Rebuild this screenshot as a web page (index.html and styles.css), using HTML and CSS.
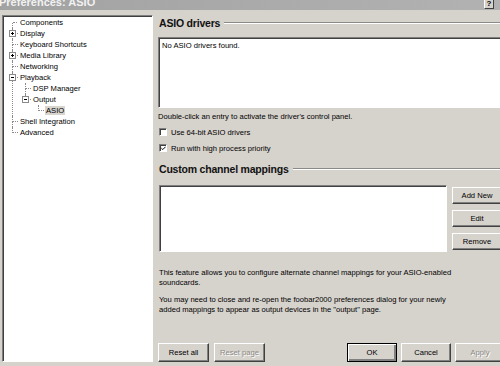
FILE: index.html
```html
<!DOCTYPE html>
<html lang="en">
<head>
  <meta charset="UTF-8">
  <title>Preferences: ASIO</title>
  <link rel="stylesheet" href="styles.css">
</head>
<body>
  <div class="titlebar">
    <span class="title">Preferences: ASIO</span>
    <span class="help">?</span>
  </div>

  <div class="main">
    <!-- page tree -->
    <div class="tree-panel">
      <ul class="tree">
        <li><span>Components</span></li>
        <li><i class="exp plus"></i><span>Display</span></li>
        <li><span>Keyboard Shortcuts</span></li>
        <li><i class="exp plus"></i><span>Media Library</span></li>
        <li><span>Networking</span></li>
        <li><i class="exp"></i><span>Playback</span>
          <ul>
            <li><span>DSP Manager</span></li>
            <li><i class="exp"></i><span>Output</span>
              <ul>
                <li><span class="sel">ASIO</span></li>
              </ul>
            </li>
          </ul>
        </li>
        <li><span>Shell Integration</span></li>
        <li><span>Advanced</span></li>
      </ul>
    </div>

    <!-- ASIO page -->
    <div class="page">
      <div class="group-title">ASIO drivers</div>
      <div class="listbox drivers">No ASIO drivers found.</div>
      <div class="hint">Double-click an entry to activate the driver's control panel.</div>

      <label class="check"><span class="box"></span>Use 64-bit ASIO drivers</label>
      <label class="check"><span class="box">
        <svg width="7" height="7" viewBox="0 0 7 7"><path d="M0.5 3 L2.5 5 L6.5 1" fill="none" stroke="#000" stroke-width="1.4"/></svg>
      </span>Run with high process priority</label>

      <div class="group-title second">Custom channel mappings</div>
      <div class="mapping-row">
        <div class="listbox mappings"></div>
        <div class="side-buttons">
          <button class="btn">Add New</button>
          <button class="btn">Edit</button>
          <button class="btn">Remove</button>
        </div>
      </div>

      <p class="note first">This feature allows you to configure alternate channel mappings for your ASIO-enabled<br>soundcards.</p>
      <p class="note">You may need to close and re-open the foobar2000 preferences dialog for your newly<br>added mappings to appear as output devices in the "output" page.</p>

      <div class="dialog-buttons">
        <button class="btn wide">Reset all</button>
        <button class="btn wide" disabled>Reset page</button>
        <span class="spacer"></span>
        <button class="btn default">OK</button>
        <button class="btn">Cancel</button>
        <button class="btn" disabled>Apply</button>
      </div>
    </div>
  </div>
</body>
</html>
```

FILE: styles.css
```css
    html, body {
      margin: 0;
      height: 100%;
      overflow: hidden;
    }
    body {
      background: #d6d2cc;
      font-family: "Liberation Sans", Arial, sans-serif;
      font-size: 7.6px;
      color: #000;
    }

    .titlebar {
      height: 10px;
      overflow: hidden;
      display: flex;
      justify-content: space-between;
      background: linear-gradient(to right, #a2a2a2, #b2b2b2);
    }
    .titlebar .title {
      font-size: 11px;
      font-weight: bold;
      color: #f2f2f2;
      line-height: 10px;
      margin-top: -3px;
      margin-left: -1px;
    }
    .titlebar .help {
      width: 10px;
      height: 11px;
      margin: -2px 6px 0 0;
      background: #d6d2cc;
      border: 1px solid;
      border-color: #fff #404040 #404040 #fff;
      box-sizing: border-box;
      font-size: 8px;
      font-weight: bold;
      text-align: center;
      line-height: 10px;
    }

    .main {
      display: flex;
      height: 352px;
      padding: 5px 0 0 2px;
      box-sizing: border-box;
    }

    /* tree */
    .tree-panel {
      width: 151px;
      flex: none;
      background: #fff;
      border: 1px solid;
      border-color: #808080 #fff #fff #808080;
      box-shadow: inset 1px 1px #404040;
      box-sizing: border-box;
      padding: 1px 0 0 1px;
    }
    .tree, .tree ul {
      list-style: none;
      margin: 0;
      padding: 0;
    }
    .tree {
      padding-left: 8px;
    }
    .tree ul {
      padding-left: 6px;
    }
    .tree li {
      position: relative;
      padding-left: 7px;
      line-height: 11px;
      white-space: nowrap;
    }
    .tree li::before {
      content: '';
      position: absolute;
      left: 0;
      top: 0;
      width: 5px;
      height: 5px;
      border-left: 1px dotted #8a8a8a;
      border-bottom: 1px dotted #8a8a8a;
    }
    .tree > li:first-child::before {
      border-left: none;
      left: 1px;
      width: 4px;
    }
    .tree li:not(:last-child)::after {
      content: '';
      position: absolute;
      left: 0;
      top: 6px;
      bottom: 0;
      border-left: 1px dotted #8a8a8a;
    }
    .tree span {
      padding: 0 1px;
    }
    .tree .sel {
      background: #d8d4ce;
    }
    .exp {
      position: absolute;
      z-index: 1;
      left: -3px;
      top: 2px;
      width: 7px;
      height: 7px;
      box-sizing: border-box;
      border: 1px solid #8a8a8a;
      background: #fff;
    }
    .exp::before {
      content: '';
      position: absolute;
      left: 1px;
      top: 2px;
      width: 3px;
      height: 1px;
      background: #000;
    }
    .exp.plus::after {
      content: '';
      position: absolute;
      left: 2px;
      top: 1px;
      width: 1px;
      height: 3px;
      background: #000;
    }

    /* page */
    .page {
      width: 347px;
      flex: none;
      margin-left: 5px;
      display: flex;
      flex-direction: column;
    }
    .group-title {
      display: flex;
      align-items: center;
      height: 15px;
      font-size: 10.5px;
      font-weight: bold;
      letter-spacing: -0.2px;
      color: #111;
      margin-bottom: 7px;
      padding-left: 1px;
    }
    .group-title::after {
      content: '';
      flex: 1;
      margin-left: 4px;
      border-top: 1px solid #8c8a86;
      border-bottom: 1px solid #fff;
    }
    .group-title.second {
      margin-top: 5px;
      margin-bottom: 9px;
    }

    .listbox {
      background: #fff;
      border: 1px solid;
      border-color: #808080 #fff #fff #808080;
      box-shadow: inset 1px 1px #404040;
      box-sizing: border-box;
    }
    .drivers {
      height: 71px;
      padding: 3px 0 0 3px;
      line-height: 10px;
    }

    .hint {
      margin-top: 4px;
      line-height: 10px;
    }
    .check {
      display: flex;
      align-items: center;
      height: 16px;
      padding-left: 1px;
    }
    .check:first-of-type {
      margin-top: 2px;
    }
    .box {
      width: 8px;
      height: 8px;
      box-sizing: border-box;
      margin-right: 4px;
      background: #fff;
      border: 1px solid;
      border-color: #808080 #fff #fff #808080;
      box-shadow: inset 1px 1px #404040;
      display: flex;
      align-items: center;
      justify-content: center;
    }
    .box svg {
      margin: 1px 0 0 1px;
    }

    .mapping-row {
      display: flex;
      gap: 5px;
    }
    .mappings {
      flex: 1;
      height: 67px;
      margin-left: 1px;
    }
    .side-buttons {
      width: 53px;
      display: flex;
      flex-direction: column;
      gap: 6px;
      padding-top: 2px;
    }
    .side-buttons .btn {
      height: 17px;
    }

    .note {
      margin: 7px 0 0 1px;
      line-height: 10px;
    }
    .note.first {
      margin-top: 16px;
    }

    .btn {
      font-family: inherit;
      font-size: 7.6px;
      color: #000;
      background: #d6d2cc;
      border: 1px solid;
      border-color: #fff #404040 #404040 #fff;
      box-shadow: inset -1px -1px #808080;
      padding: 0;
      width: 50px;
      height: 19px;
    }
    .btn.wide {
      width: 51px;
    }
    .btn:disabled {
      color: #8c8a86;
      text-shadow: 1px 1px #fff;
    }
    .btn.default {
      border: 1px solid #000;
      box-shadow: inset 1px 1px #fff, inset -2px -2px #808080;
    }

    .dialog-buttons {
      margin-top: auto;
      display: flex;
      gap: 4px;
    }
    .dialog-buttons .wide + .wide {
      margin-left: 1px;
    }
    .spacer {
      flex: 1;
    }
```
